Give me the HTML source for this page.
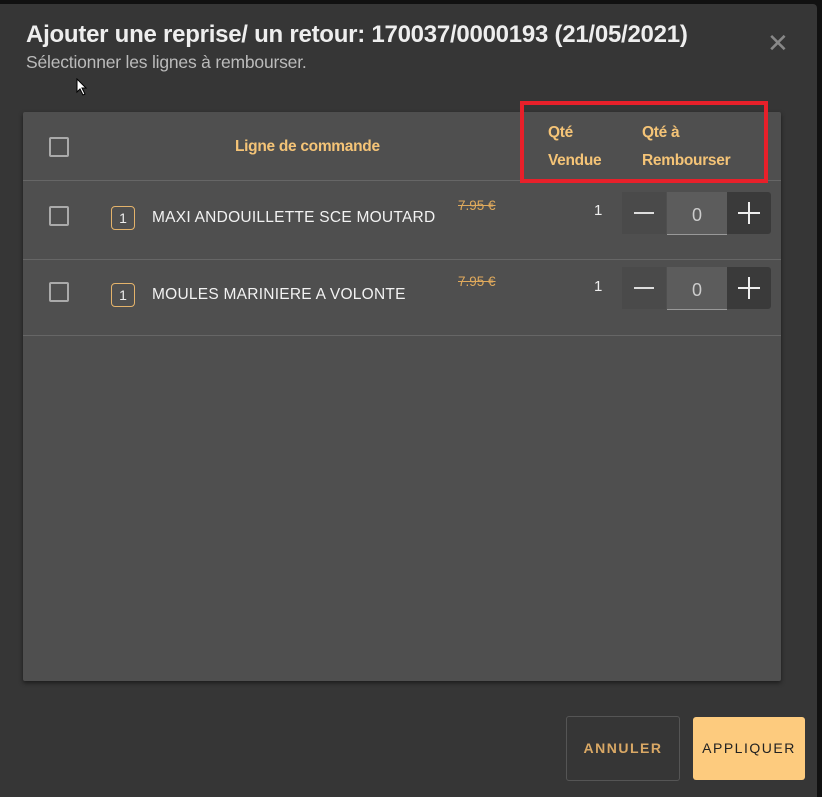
<!DOCTYPE html>
<html><head><meta charset="utf-8"><style>
body{margin:0;width:822px;height:797px;background:#111;font-family:"Liberation Sans",sans-serif;overflow:hidden;position:relative}
.dlg{position:absolute;left:0;top:4px;width:817px;height:793px;background:#363636;border-radius:0 4px 0 0}
.a{position:absolute}
.title{left:26px;top:21px;font-size:24px;font-weight:bold;color:#eee;letter-spacing:-0.25px}
.sub{left:26px;top:52px;font-size:17.5px;color:#bbb;letter-spacing:-0.2px}
.tbl{left:23px;top:112px;width:758px;height:569px;background:#4f4f4f;border-radius:2px;box-shadow:0 2px 4px rgba(0,0,0,.5)}
.line{position:absolute;left:0;width:758px;height:1px;background:#666}
.cb{position:absolute;width:16px;height:16px;border:2px solid #aaa;border-radius:2px}
.hd{color:#f5c477;font-weight:bold;font-size:15.5px;letter-spacing:-0.3px}
.badge{position:absolute;width:22px;height:22px;border:1px solid #e4b36b;border-radius:4px;color:#eee;font-size:14px;text-align:center;line-height:22px}
.name{position:absolute;color:#f2f2f2;font-size:15.5px;letter-spacing:0.25px}
.price{position:absolute;color:#e0aa5c;font-size:13.5px;text-decoration:line-through}
.q{position:absolute;color:#eee;font-size:15px}
.minus{position:absolute;width:44px;height:42px;background:#4a4a4a}
.minus:after{content:"";position:absolute;left:12px;top:20px;width:20px;height:2px;background:#ddd}
.val{position:absolute;width:60px;height:42px;background:#5c5c5c;border-bottom:1px solid #999;color:#ccc;font-size:18px;text-align:center;line-height:46px}
.plus{position:absolute;width:44px;height:42px;background:#3a3a3a;border-radius:0 3px 3px 0}
.plus:before{content:"";position:absolute;left:11px;top:20px;width:22px;height:2px;background:#eee}
.plus:after{content:"";position:absolute;left:21px;top:10px;width:2px;height:22px;background:#eee}
</style></head><body>
<div class="dlg"></div>
<div class="a title">Ajouter une reprise/ un retour: 170037/0000193 (21/05/2021)</div>
<div class="a sub">Sélectionner les lignes à rembourser.</div>
<div class="a" style="left:767px;top:30px;color:#888;font-size:26px;line-height:26px">✕</div>
<svg class="a" style="left:76px;top:78px" width="12" height="18"><path d="M1 1 L1 14 L4 11 L7 17 L9 16 L6 10 L10 10 Z" fill="#fff" stroke="#000" stroke-width="1"/></svg>
<div class="a tbl">
 <div class="line" style="top:68px"></div>
 <div class="line" style="top:147px"></div>
 <div class="line" style="top:223px"></div>
 <div class="cb" style="left:26px;top:25px"></div>
 <div class="a hd" style="left:212px;top:26px">Ligne de commande</div>
 <div class="a hd" style="left:525px;top:7px;line-height:28px;width:54px;overflow:hidden;white-space:nowrap">Qté<br>Vendue</div>
 <div class="a hd" style="left:619px;top:7px;line-height:28px">Qté à<br>Rembourser</div>

 <div class="cb" style="left:26px;top:94px"></div>
 <div class="badge" style="left:88px;top:94px">1</div>
 <div class="name" style="left:129px;top:97px">MAXI ANDOUILLETTE SCE MOUTARD</div>
 <div class="price" style="left:435px;top:86px">7.95 €</div>
 <div class="q" style="left:571px;top:90px">1</div>
 <div class="minus" style="left:599px;top:80px"></div>
 <div class="val" style="left:644px;top:80px">0</div>
 <div class="plus" style="left:704px;top:80px"></div>

 <div class="cb" style="left:26px;top:170px"></div>
 <div class="badge" style="left:88px;top:171px">1</div>
 <div class="name" style="left:129px;top:174px">MOULES MARINIERE A VOLONTE</div>
 <div class="price" style="left:435px;top:162px">7.95 €</div>
 <div class="q" style="left:571px;top:166px">1</div>
 <div class="minus" style="left:599px;top:155px"></div>
 <div class="val" style="left:644px;top:155px">0</div>
 <div class="plus" style="left:704px;top:155px"></div>
</div>
<div class="a" style="left:520px;top:101px;width:240px;height:74px;border:4px solid #e8202a"></div>
<div class="a" style="left:566px;top:716px;width:112px;height:63px;border:1px solid #555;border-radius:3px;color:#d9a865;font-weight:bold;font-size:14px;letter-spacing:1.5px;text-align:center;line-height:63px">ANNULER</div>
<div class="a" style="left:693px;top:717px;width:112px;height:63px;background:#fdcb7e;border-radius:3px;color:#222;font-size:14px;letter-spacing:1.5px;text-align:center;line-height:63px">APPLIQUER</div>
</body></html>
